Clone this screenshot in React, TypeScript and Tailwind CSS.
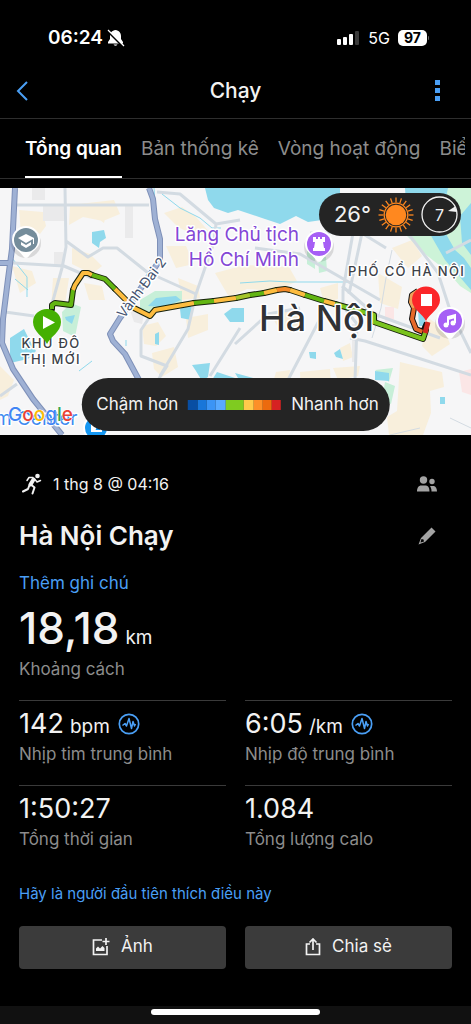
import type { ReactNode } from 'react'

const tabs = ['Tổng quan', 'Bản thống kê', 'Vòng hoạt động', 'Biểu đồ']

const paceColors = [
  { color: 'bg-[#084ea3]', grow: 'grow' },
  { color: 'bg-[#1976d9]', grow: 'grow' },
  { color: 'bg-[#3b94f5]', grow: 'grow' },
  { color: 'bg-[#58a9ff]', grow: 'grow' },
  { color: 'bg-[#7fcb20]', grow: 'grow-2' },
  { color: 'bg-[#ffca4b]', grow: 'grow' },
  { color: 'bg-[#fd8f28]', grow: 'grow' },
  { color: 'bg-[#ec6a0e]', grow: 'grow' },
  { color: 'bg-[#d62222]', grow: 'grow' },
]

const stats = [
  { value: '142', unit: 'bpm', label: 'Nhịp tim trung bình', chart: true },
  { value: '6:05', unit: '/km', label: 'Nhịp độ trung bình', chart: true },
  { value: '1:50:27', unit: '', label: 'Tổng thời gian', chart: false },
  { value: '1.084', unit: '', label: 'Tổng lượng calo', chart: false },
]

const routeSegments = [
  { color: '#62b512', d: 'M52 121L52 117L55 115L71 117L73 102' },
  { color: '#fdbc3f', d: 'M73 102L75 97L83 85L88 85L92 87' },
  { color: '#62b512', d: 'M92 87L105 91L115 101' },
  { color: '#fdbc3f', d: 'M115 101L128 114L134 120L150 128L155 122L194 115' },
  { color: '#62b512', d: 'M194 115L214 113' },
  { color: '#fdbc3f', d: 'M214 113L236 110' },
  { color: '#a4c52a', d: 'M236 110L250 107' },
  { color: '#62b512', d: 'M250 107L264 105' },
  { color: '#fdbc3f', d: 'M264 105L277 102' },
  { color: '#f58a28', d: 'M277 102L285 101L290 102' },
  { color: '#fdbc3f', d: 'M290 102L305 107' },
  { color: '#62b512', d: 'M305 107L324 113' },
  { color: '#fdbc3f', d: 'M324 113L335 116' },
  { color: '#7ac31d', d: 'M335 116L374 127L374 134L423 151L426 142' },
]

function Pin({ x, y, fill, children }: { x: number; y: number; fill: string; children: ReactNode }) {
  return (
    <g transform={`translate(${x} ${y})`}>
      <circle cy="3" r="15" fill="#000" opacity="0.12" />
      <path d="M-14 0a14 14 0 1 1 28 0c0 8-7 10-11 16q-1 2-3 2t-3-2c-4-6-11-8-11-16z" fill="#fff" />
      <circle r="12" fill={fill} />
      {children}
    </g>
  )
}

function RouteMap() {
  return (
    <svg viewBox="0 0 471 247" preserveAspectRatio="xMidYMid slice" className="block h-full w-full" role="img" aria-label="Bản đồ tuyến chạy">
      <rect width="471" height="247" fill="#f6f6f7" />

      {/* built-up blocks */}
      <g fill="#f8efdc">
        <path d="M19 22l24 2 3 14-6 8-8-5-11 4zM70 17l44-5 6 14-17 7-20-4-14 8zM72 60l18 6 12 12-10 8-20-10zM90 25l18-6-4 16zM12 78l20 5 4 12-16 10zM53 90l16 0-4 26-14 4zM84 95l18 3 3 14-16 0zM164 25l18-6 14 10 16 18-18 0-16-8zM166 58l20 0 8 18-18 4zM178 90l20 8 2 12-18 2zM0 178l14 14-6 16-8 4zM142 138l16-4 8 14-10 10-12-2zM152 165l22-6 4 20-16 10-8-8zM215 85l30-8 44 2 8 14-20 10-30-2-18 8zM186 130l22-4 0 16-20 8zM300 184l30-3 1 16-30 5zM333 180l27-2-2 10-20 4zM276 184l14-2-2 18-16-2z" />
        <path d="M400 174l42 10 2 15-14 4 1 22-8 22-34 0-2-18 10-6zM428 130l16 10 6 16-18 12-10-10zM378 85l24 14-4 22-18-6zM320 100l18-5 0 16-14 4zM270 125l26-4 4 16-20 6zM340 160l10-5 3 14-10 4zM392 60l20-8 10 16-14 12z" />
      </g>
      <g fill="#eaeaeb">
        <path d="M32 0h13v12h-13zM43 16h22v17h-22zM125 18h8v32h-8zM54 64h9v14h-9zM130 122l14 4-2 10-8-2zM352 136h5v38h-5z" />
      </g>
      <g fill="#fbe6e6">
        <path d="M385 119h9v12l-9 4zM459 184l12-3v26l-9-3z" />
      </g>

      {/* parks */}
      <g fill="#c7efd8">
        <path d="M140 112l15-9 27 0 0 13-18 7-24 2zM62 124l9-9 10 4-6 30-12-6zM307 55l8 4 0 22-8-5zM318 69l8 0 1 14-8 2zM385 194l10 4-4 18-9-4zM375 182l18-2-4 14z" />
        <path d="M405 46L440 0H471V105L460 98 448 84 425 66z" fill="#cdf3d8" />
      </g>

      {/* lakes and river */}
      <g fill="#8fd9ec">
        <path d="M205 0H340V30L322 32 308 34 296 28 280 36 262 30 238 22 228 25 214 20 208 12z" />
        <path d="M405 0h43l-10 46h-30z" />
        <path d="M430 46h16l9 16 9 8 7 10v22l-12-14-14-16z" />
        <path d="M460 28l11-13v52l-9-12z" />
        <path d="M92 44l12-2 2 8-6 4-1 6-7-5zM148 118l8-8 20-2 5 4-16 7zM65 129l10-2-3 9-6-4zM10 150l14-9 6 12 6 10-8 8-18 4zM180 121l7-4 5 2-1 13-10-2zM155 146l4-2 0 13-4-1zM192 177l18-2-2 14-6 4-6-10zM224 126l8-6 12 0 0 14-14 0zM217 184l24 8 20 8h-54zM235 185l22 6-16 4zM375 183l14 2 0 8-14-1zM334 165l6-4 3 10-7-2zM309 164l7 0 0 7-6-1zM440 209l5 0 0 7-5 0z" />
      </g>
      <g stroke="#8fd9ec" strokeWidth="1" fill="none">
        <path d="M12 70l15 19v20M15 91l13 11M79 183l13-10M126 152v6M154 0l2 28M162 6l18 14 20 10 12 10h9M240 95l30-2 20 1h60" />
      </g>

      {/* minor roads */}
      <g fill="none" stroke="#d3dbe2" strokeWidth="3" strokeLinejoin="round">
        <path d="M16 17H149M65 0L66 59 62 80 52 116M13 75L64 78 92 90M66 53L88 69 103 60H117L147 84 196 106" />
        <path d="M157 4L180 6 216 36 240 32M216 36L214 54 196 106 188 141 160 188M5 124L34 128M149 130L141 142V168L167 178 158 192M240 140L210 188M0 208L17 196" />
        <path d="M353 45L343 102V118L357 136 355 192M362 45L349 106M310 45L360 44 386 60M342 98L374 126 440 150M255 60L300 66 380 112" />
        <path d="M235 156L268 126 300 120M323 125L288 192M350 150L365 153 471 187M395 28L438 85 450 122 471 165M446 65L471 52" />
        <path d="M392 62L386 90 381 120 372 150" strokeWidth="1" />
        <path d="M450 230L471 240M390 247L420 240" strokeWidth="1" />
      </g>

      {/* main roads */}
      <g fill="none" strokeLinejoin="round">
        <path d="M15 0L12 61 8 91 3 131 2 155 13 181 33 211 62 247M0 75H12M149 0L153 11 155 31 160 51 160 72 147 91 131 115 120 130 110 146 113 153 125 166 139 192" stroke="#7e90b8" strokeWidth="6" />
        <path d="M15 0L12 61 8 91 3 131 2 155 13 181 33 211 62 247M0 75H12M149 0L153 11 155 31 160 51 160 72 147 91 131 115 120 130 110 146 113 153 125 166 139 192" stroke="#9fb1d4" strokeWidth="4" />
      </g>

      {/* finish loop */}
      <path d="M418 122l8 6-2 10-5 0z" fill="#8fd9ec" />
      <g fill="none" strokeLinejoin="round">
        <path d="M418 103L412 107 411 114 414 120 412 131 416 141 423 144 427 135" stroke="#111" strokeWidth="6" />
        <path d="M418 103L412 107 411 114 414 120" stroke="#f0a25a" strokeWidth="4" />
        <path d="M414 120L412 131 416 141 423 144" stroke="#e5692a" strokeWidth="4" />
      </g>

      {/* route */}
      <g fill="none" strokeLinejoin="round">
        {routeSegments.map((segment) => (
          <path key={segment.d} d={segment.d} stroke="#16210c" strokeWidth="6" strokeLinecap="round" />
        ))}
        {routeSegments.map((segment) => (
          <path key={segment.d} d={segment.d} stroke={segment.color} strokeWidth="4" />
        ))}
        <path d="M425 145L428 134" stroke="#d3271f" strokeWidth="5" />
      </g>

      {/* place names */}
      <g fontFamily="Inter, sans-serif" stroke="#fff" strokeWidth="3" paintOrder="stroke" strokeLinejoin="round">
        <g fill="#8347d6" fontSize="19" textAnchor="end">
          <text x="299" y="53">Lăng Chủ tịch</text>
          <text x="299" y="78">Hồ Chí Minh</text>
        </g>
        <text x="259" y="143" fontSize="36" fill="#303236" fontWeight="500">Hà Nội</text>
        <g fill="#3c4148" fontSize="13" fontWeight="500" letterSpacing="0.1em">
          <text x="348" y="88">PHỐ CỔ HÀ NỘI</text>
          <text x="51" y="160" textAnchor="middle">KHU ĐÔ</text>
          <text x="51" y="176" textAnchor="middle">THỊ MỚI</text>
        </g>
        <text transform="translate(124 131) rotate(-53)" fontSize="14" fill="#44536f">Vành Đai 2</text>
        <text x="-5" y="237" fontSize="19" fill="#3e8bf0">m Center</text>
      </g>

      {/* points of interest */}
      <Pin x={26} y={52} fill="#758d9b">
        <path d="M-8-2L0-6 8-2V4H7V-1L0 3ZM-5 2V5L0 8 5 5V2L0 5Z" fill="#fff" />
      </Pin>
      <Pin x={319} y={56} fill="#a65ff5">
        <path d="M-6-7H-3V-5H-1V-7H1V-5H3V-7H6V-2H4L5 4H6V7H-6V4H-5L-4-2H-6Z" fill="#fff" />
      </Pin>
      <Pin x={450} y={133} fill="#a65ff5">
        <path d="M-2 4V-4L5-6V2M-2-2L5-4" stroke="#fff" strokeWidth="2" fill="none" />
        <circle cx="-4" cy="4" r="2.5" fill="#fff" />
        <circle cx="3" cy="2" r="2.5" fill="#fff" />
      </Pin>
      <circle cx="96" cy="240" r="13" fill="#fff" />
      <circle cx="96" cy="240" r="11" fill="#1597f2" />
      <path d="M91 236h11v8h-11z" fill="#fff" />
      <path d="M94 238h4l-1 3h3" stroke="#1597f2" strokeWidth="2" fill="none" />

      {/* start and finish */}
      <path d="M47 156C44 149 33 144 33 134a14 13 0 0 1 28 0C61 144 50 149 47 156Z" fill="#45b002" />
      <path d="M43 128L55 134.5 43 141Z" fill="#fff" />
      <path d="M426 133C423 126 412 121 412 112a14 13.5 0 0 1 28 0C440 121 429 126 426 133Z" fill="#fb2629" />
      <rect x="421" y="106" width="11" height="12" fill="#fff" />

      {/* attribution */}
      <text x="8" y="233" fontFamily="Inter, sans-serif" fontSize="19" fontWeight="500" stroke="#fff" strokeWidth="1" paintOrder="stroke">
        <tspan fill="#4285f4">G</tspan>
        <tspan fill="#ea4335">o</tspan>
        <tspan fill="#fbbc05">o</tspan>
        <tspan fill="#4285f4">g</tspan>
        <tspan fill="#34a853">l</tspan>
        <tspan fill="#ea4335">e</tspan>
      </text>
    </svg>
  )
}

function StatusBar() {
  return (
    <div className="flex h-[62px] items-end justify-between pr-[42px] pb-3 pl-12 text-white">
      <div className="flex items-center gap-1">
        <span className="text-[19px] leading-6 font-semibold">06:24</span>
        <svg width="18" height="18" viewBox="0 0 18 18" aria-hidden="true">
          <path d="M8.5 1C5 1.5 3 4 3 7V10L1 13V14.5H16V13L14 10V7C14 4 12 1.5 8.5 1ZM6.5 15.5H10.5Q8.5 18 6.5 15.5Z" fill="#fff" />
          <path d="M1 2.5L15.5 17" stroke="#000" strokeWidth="2" />
          <path d="M1 1L17 17" stroke="#fff" strokeWidth="1.3" />
        </svg>
      </div>
      <div className="flex items-center gap-2">
        <svg width="23" height="16" viewBox="0 0 23 16" aria-hidden="true">
          <rect x="0" y="9" width="4" height="6" rx="1" fill="#fff" />
          <rect x="6" y="7" width="4" height="8" rx="1" fill="#fff" />
          <rect x="12" y="4" width="4" height="11" rx="1" fill="#fff" />
          <rect x="18" y="1" width="4" height="14" rx="1" fill="#3a3a3a" />
        </svg>
        <span className="text-base leading-6">5G</span>
        <div className="flex items-center gap-px">
          <span className="rounded-[5px] bg-white px-[6px] text-sm leading-4 font-bold text-black">97</span>
          <span className="h-1 w-px rounded-r bg-[#666]" />
        </div>
      </div>
    </div>
  )
}

function ChartIcon() {
  return (
    <svg width="22" height="22" viewBox="0 0 22 22" fill="none" stroke="#4a9ff5" aria-hidden="true">
      <circle cx="11" cy="11" r="9.7" strokeWidth="1.7" />
      <path d="M4.5 12.5L7 10.5L8.5 13L11 5.5L13.5 15.5L15 8.5L16.5 13L17.5 11" strokeWidth="1.5" strokeLinejoin="round" />
    </svg>
  )
}

export default function App() {
  return (
    <div className="flex min-h-screen flex-col bg-black font-[Inter,sans-serif] text-[#f2f2f2]">
      <StatusBar />

      <header className="flex h-14 items-center justify-between px-4 pt-[2px]">
        <button type="button" aria-label="Quay lại" className="w-9">
          <svg width="12" height="20" viewBox="0 0 12 20" fill="none" stroke="#4a9ff5" strokeWidth="2" aria-hidden="true">
            <path d="M11 1L2 10L11 19" />
          </svg>
        </button>
        <h1 className="text-[21px] leading-7 font-medium">Chạy</h1>
        <button type="button" aria-label="Tùy chọn khác" className="flex w-9 justify-center">
          <svg width="5" height="22" viewBox="0 0 5 22" fill="#4a9ff5" aria-hidden="true">
            <path d="M0 0h5v5H0zM0 8h5v5H0zM0 16h5v5H0z" />
          </svg>
        </button>
      </header>

      <nav className="border-y border-[#2e2e2e] pr-[6px] pl-[25px]">
        <div className="flex h-[59px] gap-[19px] overflow-hidden whitespace-nowrap">
          {tabs.map((tab, index) => (
            <button
              key={tab}
              type="button"
              className={
                index === 0
                  ? 'shrink-0 border-b-2 border-white pt-1 text-[19px] font-semibold text-white'
                  : 'shrink-0 border-b-2 border-transparent pt-1 text-[19px] text-[#8c8c8c]'
              }
            >
              {tab}
            </button>
          ))}
        </div>
      </nav>

      <section className="relative mt-[9px] h-[247px]">
        <RouteMap />

        <div className="absolute top-[5px] right-[10px] flex h-[43px] items-center gap-[7px] rounded-full bg-[#242424] pr-[3px] pl-[15px]">
          <span className="text-[22px]">26°</span>
          <svg width="36" height="36" viewBox="0 0 36 36" aria-hidden="true">
            {[...Array(20)].map((_, i) => (
              <path key={i} d="M18 0.5V5.5" stroke="#ff881f" strokeWidth="1.3" transform={`rotate(${i * 18} 18 18)`} />
            ))}
            <circle cx="18" cy="18" r="11.8" fill="none" stroke="#ff881f" strokeWidth="1.3" />
            <circle cx="18" cy="18" r="10.3" fill="#ff881f" />
          </svg>
          <div className="relative flex size-[37px] items-center justify-center text-base">
            <svg className="absolute inset-0" width="37" height="37" viewBox="0 0 37 37" aria-hidden="true">
              <circle cx="18.5" cy="18.5" r="17.5" fill="none" stroke="#f2f2f2" strokeWidth="1.3" />
              <path d="M27 15L34 10.5L36 16Z" fill="#f2f2f2" />
            </svg>
            7
          </div>
        </div>

        <div className="absolute bottom-1 left-1/2 flex h-[53px] -translate-x-1/2 items-center gap-[10px] rounded-full bg-[#242424] pr-[11px] pl-[15px] text-[17px] whitespace-nowrap">
          <span>Chậm hơn</span>
          <div className="flex h-[10px] w-[93px]">
            {paceColors.map((pace) => (
              <span key={pace.color} className={`${pace.color} ${pace.grow}`} />
            ))}
          </div>
          <span>Nhanh hơn</span>
        </div>
      </section>

      <main className="px-[19px] pt-[37px]">
        <div className="flex h-6 items-center justify-between">
          <div className="flex items-center gap-[11px] pl-[3px]">
            <svg width="20" height="22" viewBox="0 0 20 22" aria-hidden="true">
              <circle cx="15.5" cy="3" r="2.3" fill="#f2f2f2" />
              <g fill="none" stroke="#f2f2f2" strokeLinecap="round" strokeLinejoin="round">
                <path d="M11.5 6.5L8.5 11.5" strokeWidth="4" />
                <path d="M11 4.5L7 4.5L5 7.5M13 6.5L15 9L18.5 7.5" strokeWidth="1.5" />
                <path d="M9.5 12L12.5 14.5L10.5 20.5M7.5 12L6 16L1 18.5" strokeWidth="2" />
              </g>
            </svg>
            <span className="text-base">1 thg 8 @ 04:16</span>
          </div>
          <button type="button" aria-label="Bạn bè" className="mr-[15px]">
            <svg width="20" height="16" viewBox="0 0 20 16" fill="#a3a3a3" aria-hidden="true">
              <circle cx="6.5" cy="4" r="3.7" />
              <circle cx="15" cy="5.5" r="2.7" />
              <path d="M0 15.5C0 11.5 2 9.5 4 9.5H9C11 9.5 12.5 11.5 12.5 15.5ZM13 10H17C19 10.5 20 13 20 15.5H14.5C14.5 13 14 11.5 13 10Z" />
            </svg>
          </button>
        </div>

        <div className="mt-6 flex h-8 items-center justify-between">
          <h2 className="text-[26px] leading-8 font-semibold">Hà Nội Chạy</h2>
          <button type="button" aria-label="Chỉnh sửa" className="mr-4">
            <svg width="18" height="18" viewBox="0 0 18 18" fill="#a3a3a3" aria-hidden="true">
              <path d="M13.5 0.5L17.5 4.5L7 15L0.5 17.5L3 11ZM3.5 12L2.5 15.5L6 14.5L5.5 12.5Z" fillRule="evenodd" />
            </svg>
          </button>
        </div>

        <a href="#note" className="mt-[19px] block text-[17px] leading-6 text-[#4a9ff5]">
          Thêm ghi chú
        </a>

        <div className="mt-[9px] flex items-baseline gap-[6px]">
          <span className="text-[44px] leading-12 font-medium">18,18</span>
          <span className="text-[19px]">km</span>
        </div>
        <p className="mt-1 text-[17px] leading-6 text-[#8c8c8c]">Khoảng cách</p>

        <div className="mt-[19px] grid grid-cols-2 gap-x-[19px]">
          {stats.map((stat) => (
            <div key={stat.label} className="h-[85px] border-t border-[#3a3a3a] pt-[5px]">
              <div className="flex h-9 items-center gap-2">
                <div className="flex items-baseline gap-[6px]">
                  <span className="text-[27px] leading-9">{stat.value}</span>
                  {stat.unit && <span className="text-[19px]">{stat.unit}</span>}
                </div>
                {stat.chart && <ChartIcon />}
              </div>
              <p className="text-[17px] leading-6 text-[#8c8c8c]">{stat.label}</p>
            </div>
          ))}
        </div>

        <a href="#like" className="mt-3 block text-[15px] leading-6 text-[#4a9ff5]">
          Hãy là người đầu tiên thích điều này
        </a>

        <div className="mt-5 grid grid-cols-2 gap-[19px] text-[17px]">
          <button type="button" className="flex h-[43px] items-center justify-center gap-[11px] rounded-[4px] bg-[#3b3b3b]">
            <svg width="18" height="18" viewBox="0 0 18 18" fill="none" stroke="#f2f2f2" strokeWidth="1.7" aria-hidden="true">
              <path d="M10 2H1.5V16.5H15V8M14 0V7M10.5 3.5H17.5" />
              <path d="M4 13V10.5L6 8.5L8 10.5L10.5 8L12.5 10V13Z" fill="#f2f2f2" stroke="none" />
            </svg>
            Ảnh
          </button>
          <button type="button" className="flex h-[43px] items-center justify-center gap-[11px] rounded-[4px] bg-[#3b3b3b]">
            <svg width="16" height="18" viewBox="0 0 16 18" fill="none" stroke="#f2f2f2" strokeWidth="1.7" aria-hidden="true">
              <path d="M5 6H1.5V16.5H14.5V6H11M8 12V1.5M4.5 4.5L8 1L11.5 4.5" />
            </svg>
            Chia sẻ
          </button>
        </div>
      </main>

      <footer className="mt-auto flex h-[18px] justify-center bg-[#111] pt-[3px]">
        <div className="h-[6px] w-[169px] rounded-full bg-white" />
      </footer>
    </div>
  )
}
